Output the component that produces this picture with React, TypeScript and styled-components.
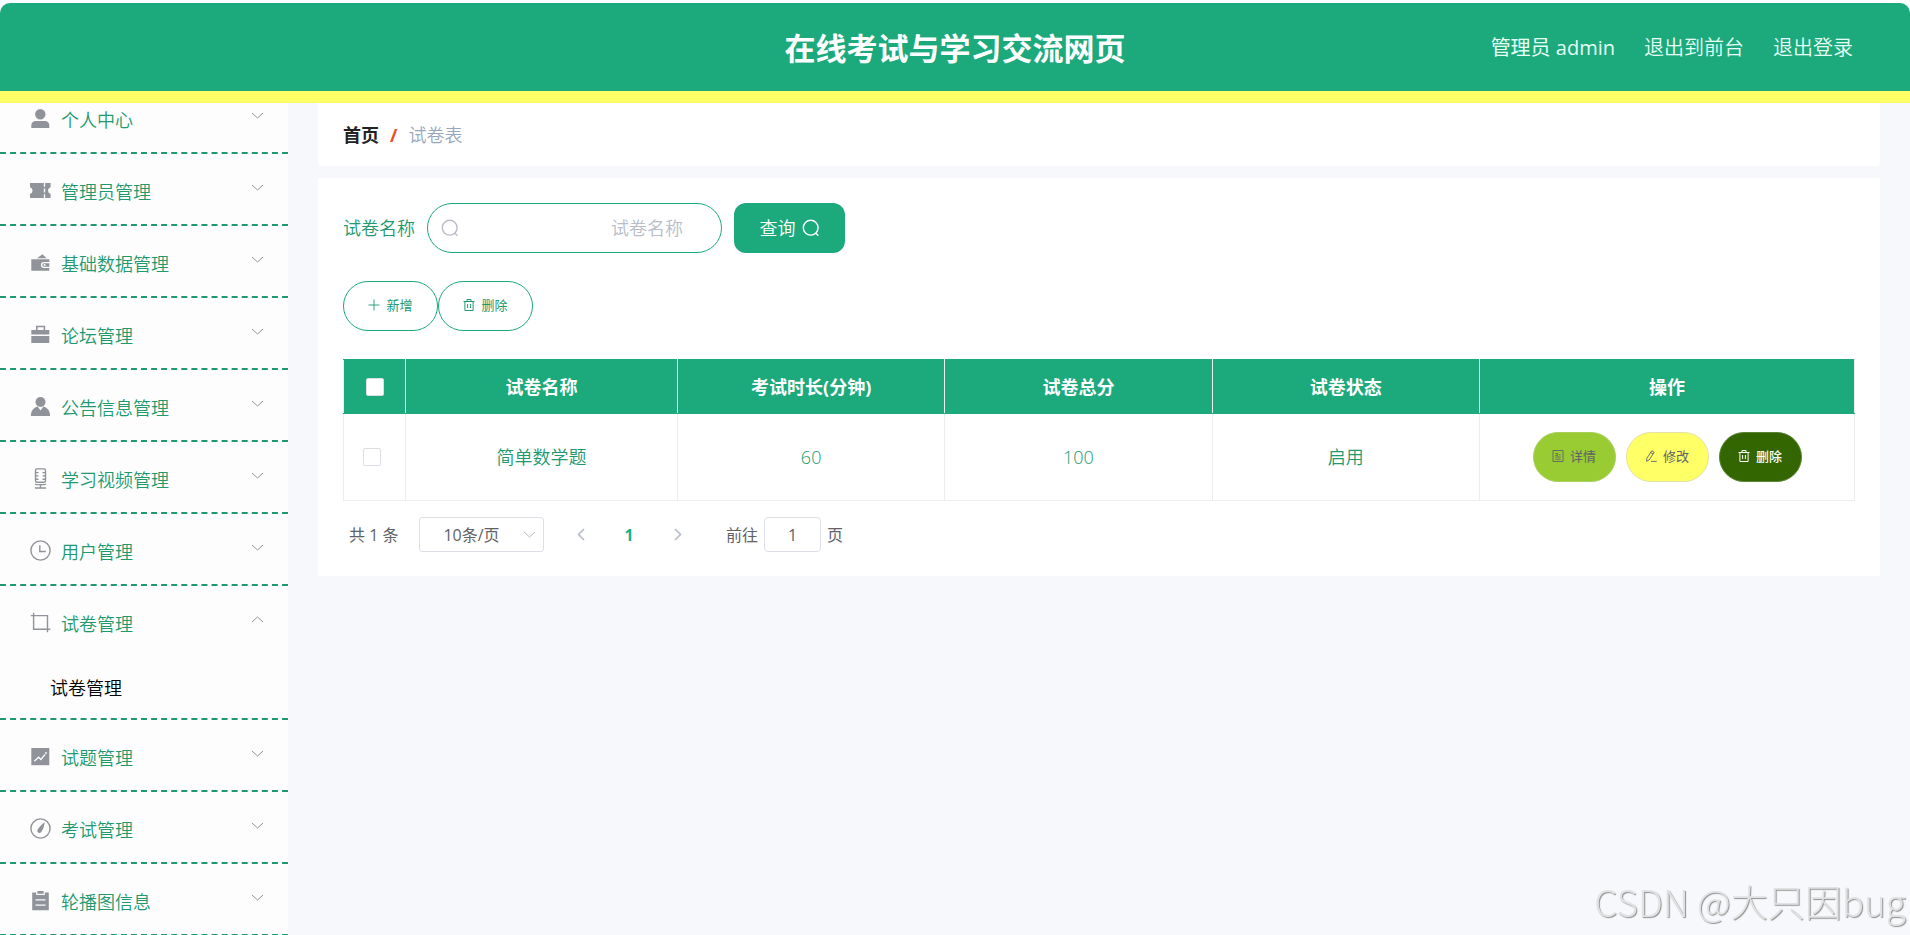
import React from "react";
import styled, { createGlobalStyle } from "styled-components";

const c = {
  green: "#1ca97c",
  text: "#20996f",
  yellow: "#ffff66",
  page: "#f6f8fb",
  side: "#fdfdfd",
  line: "#ebeef0",
  field: "#dcdfe6",
  muted: "#b8bdc7",
  grey: "#606266",
  icon: "#909399",
};

const Global = createGlobalStyle`
  *, *::before, *::after { box-sizing: border-box; }
  body {
    margin: 0;
    background: #fbfefd;
    color: ${c.text};
    font-family: "Open Sans", "Noto Sans CJK SC", sans-serif;
    font-size: 18px;
    font-weight: 350;
    line-height: 24px;
  }
  button, input, select { font: inherit; color: inherit; margin: 0; }
  button { cursor: pointer; }
  a { color: inherit; text-decoration: none; }
`;

const Shell = styled.div`
  height: 100vh;
  padding-top: 3px;
  display: flex;
  flex-direction: column;
  overflow: hidden;
`;

const Header = styled.header`
  flex: none;
  display: grid;
  grid-template-columns: 1fr auto 1fr;
  align-items: center;
  height: 100px;
  padding: 2px 57px 0;
  background: ${c.green};
  border-bottom: 12px solid ${c.yellow};
  border-radius: 10px 10px 0 0;
  color: #fff;
`;

const Title = styled.h1`
  grid-column: 2;
  margin: 0;
  font-size: 31px;
  line-height: 40px;
  font-weight: 700;
`;

const UserNav = styled.nav`
  display: flex;
  justify-content: flex-end;
  gap: 29px;
  font-size: 20px;
  color: #e6fff6;
`;

const UserName = styled.span`
  font-weight: 400;
`;

const Body = styled.div`
  flex: 1;
  min-height: 0;
  display: flex;
  background: ${c.page};
`;

const Sidebar = styled.aside`
  flex: none;
  width: 288px;
  overflow: hidden;
  background: ${c.side};
`;

const Menu = styled.ul`
  list-style: none;
  margin: -21px 0 0;
  padding: 0;
`;

const MenuItem = styled.li`
  border-bottom: 2px dashed ${c.text};
`;

const MenuTitle = styled.button`
  display: flex;
  align-items: center;
  gap: 10px;
  width: 100%;
  height: 70px;
  padding: 2px 24px 0 30px;
  border: 0;
  background: none;
  text-align: left;
`;

const MenuText = styled.span`
  flex: 1;
  padding-top: 3px;
`;

const ArrowIcon = styled.svg<{ $open?: boolean }>`
  width: 13px;
  height: 13px;
  margin-bottom: 5px;
  fill: none;
  stroke: ${c.icon};
  transform: rotate(${(p) => (p.$open ? 180 : 0)}deg);
`;

const SubLink = styled.a`
  display: block;
  height: 62px;
  padding: 20px 0 0 50px;
  color: #000;
`;

const MenuIcon = styled.svg`
  flex: none;
  width: 21px;
  height: 21px;
  fill: ${c.icon};
  stroke: none;

  .line { fill: none; stroke: ${c.icon}; stroke-width: 1.4; }
  .cut { fill: none; stroke: ${c.side}; stroke-width: 1.3; }
  .hole { fill: ${c.side}; }
`;

const Main = styled.main`
  flex: 1;
  min-width: 0;
  padding: 0 30px;
`;

const Crumbs = styled.nav`
  display: flex;
  align-items: center;
  gap: 11px;
  height: 63px;
  padding: 0 25px;
  margin-bottom: 12px;
  background: #fff;
  border-radius: 0 0 4px 4px;
  color: #97a8be;
`;

const Home = styled.a`
  color: #222;
  font-weight: 700;
`;

const Slash = styled.span`
  color: #f04a23;
  font-weight: 700;
`;

const Card = styled.section`
  padding: 25px 25px 24px;
  background: #fff;
`;

const SearchForm = styled.form`
  display: flex;
  align-items: center;
  gap: 12px;
  margin-bottom: 28px;
`;

const SearchBox = styled.div`
  display: flex;
  align-items: center;
  width: 295px;
  height: 50px;
  padding: 0 36px 0 13px;
  border: 1px solid ${c.green};
  border-radius: 25px;
  color: ${c.muted};
`;

const SearchInput = styled.input`
  flex: 1;
  min-width: 0;
  border: 0;
  outline: 0;
  background: none;
  text-align: right;
  color: ${c.grey};
  &::placeholder { color: ${c.muted}; opacity: 1; }
`;

const QueryButton = styled.button`
  display: flex;
  align-items: center;
  justify-content: center;
  gap: 6px;
  width: 111px;
  height: 50px;
  border: 0;
  border-radius: 12px;
  background: ${c.green};
  color: #fff;
`;

const Glyph = styled.svg<{ $size: number }>`
  flex: none;
  width: ${(p) => p.$size}px;
  height: ${(p) => p.$size}px;
  fill: none;
  stroke: currentColor;
`;

const Toolbar = styled.div`
  display: flex;
  margin-bottom: 28px;
`;

const PillButton = styled.button<{ $bg?: string; $fg?: string; $edge?: string; $width: number; $strong?: boolean }>`
  display: flex;
  align-items: center;
  justify-content: center;
  gap: 6px;
  width: ${(p) => p.$width}px;
  height: 50px;
  padding: 0 0 2px;
  border: 1px solid ${(p) => p.$edge ?? c.green};
  border-radius: 25px;
  background: ${(p) => p.$bg ?? "#fff"};
  color: ${(p) => p.$fg ?? c.text};
  font-size: 13px;
  font-weight: ${(p) => (p.$strong ? 500 : 400)};
`;

const Table = styled.table`
  width: 100%;
  table-layout: fixed;
  border-collapse: collapse;
  text-align: center;
`;

const Col = styled.col<{ $w?: string }>`
  width: ${(p) => p.$w ?? "auto"};
`;

const Th = styled.th`
  height: 54px;
  padding: 0;
  background: ${c.green};
  border: 1px solid ${c.line};
  border-top-color: ${c.green};
  border-bottom-color: ${c.green};
  color: #fff;
  font-weight: 700;
`;

const Td = styled.td`
  height: 87px;
  padding: 0 0 1px;
  border: 1px solid ${c.line};
`;

const SelectTd = styled(Td)`
  padding: 0 5px 0 0;
`;

const Check = styled.input`
  appearance: none;
  display: block;
  width: 18px;
  height: 18px;
  margin: 0 auto;
  border: 1px solid ${c.field};
  border-radius: 2px;
  background: #fff;
`;

const RowActions = styled.div`
  display: flex;
  justify-content: center;
  gap: 10px;
`;

const Pager = styled.div`
  display: flex;
  align-items: center;
  height: 35px;
  margin-top: 16px;
  padding-left: 6px;
  font-size: 16px;
  font-weight: 400;
  color: ${c.grey};
`;

const Total = styled.span`
  width: 70px;
`;

const SizeBox = styled.div`
  position: relative;
  width: 125px;
`;

const SizeSelect = styled.select`
  appearance: none;
  display: block;
  width: 100%;
  height: 35px;
  padding: 0 20px 0 0;
  border: 1px solid ${c.field};
  border-radius: 3px;
  background: #fff;
  text-align: center;
  text-align-last: center;
`;

const SizeArrow = styled.svg`
  position: absolute;
  right: 8px;
  top: 11px;
  width: 13px;
  height: 13px;
  fill: none;
  stroke: ${c.muted};
  pointer-events: none;
`;

const Pages = styled.div`
  display: flex;
  margin: 0 25px 0 13px;
`;

const PageButton = styled.button`
  display: flex;
  align-items: center;
  justify-content: center;
  width: 48px;
  height: 35px;
  padding: 0;
  border: 0;
  background: none;
  color: #18b08c;
  font-weight: 700;
  &:disabled { color: #b4bccc; }
`;

const Jump = styled.label`
  display: flex;
  align-items: center;
  gap: 6px;
`;

const JumpInput = styled.input`
  width: 57px;
  height: 35px;
  padding: 0;
  border: 1px solid ${c.field};
  border-radius: 4px;
  text-align: center;
`;

const Watermark = styled.div`
  position: fixed;
  right: 4px;
  bottom: 8px;
  font-family: "Noto Sans CJK SC", sans-serif;
  font-size: 37px;
  line-height: 52px;
  font-weight: 300;
  color: #e2e2e3;
  text-shadow: 1px 1px 1px #8f8f8f;
  pointer-events: none;
`;

const icons: Record<string, React.ReactNode> = {
  user: (
    <>
      <circle cx="10.3" cy="6.2" r="5.2" />
      <path d="M1.3 20v-2.6c0-2.600 1.800-4.400 4.400-4.400h9.200c2.600 0 4.400 1.800 4.400 4.400V20z" />
    </>
  ),
  ticket: (
    <>
      <path d="M0 3h20.600v4.200a3.400 3.400 0 0 0 0 6.600V18H0v-4.200a3.400 3.400 0 0 0 0-6.600z" />
      <path className="cut" d="M14.500 2.500v4.200M14.500 8.600v3.800M14.500 14.300v4.200" />
    </>
  ),
  wallet: (
    <>
      <path d="M7 6.200 12.400 2.200 16.600 6.200z" />
      <path d="M1.300 7.200h18V10h-5.400a3 3 0 0 0 0 6h5.400v2.800h-18z" />
      <path d="M19.300 11.200h-5.200a1.800 1.800 0 0 0 0 3.600h5.200z" />
      <circle className="hole" cx="14.600" cy="13" r="1" />
    </>
  ),
  briefcase: (
    <>
      <path fillRule="evenodd" d="M6 6V1.700h9.200V6h4.100v4.600H1.300V6zM7.600 6h6V3.300h-6z" />
      <path d="M1.300 12h18v7h-18z" />
    </>
  ),
  custom: (
    <>
      <circle cx="10.500" cy="6" r="5" />
      <path d="M.9 20c0-4.900 2.500-8.300 6.800-9.400l2.800 4 2.800-4c4.300 1.100 6.800 4.500 6.800 9.400z" />
    </>
  ),
  mic: (
    <path
      className="line"
      d="M7 .9h7q1.500 0 1.500 1.500v10.400q0 1.500-1.500 1.500H7q-1.500 0-1.500-1.500V2.400Q5.500.9 7 .9zM5.500 4.600h3M5.500 7.900h3M5.500 11.200h3M15.500 4.600h-3M15.500 7.900h-3M15.500 11.200h-3M5 15.800q.6.800 2 .8h7q1.400 0 2-.8M10.500 16.600v3M5 20h11"
    />
  ),
  clock: (
    <>
      <circle className="line" cx="10.500" cy="10.500" r="9.600" />
      <path className="line" d="M9.800 5.200v6.300h6" />
    </>
  ),
  crop: <path className="line" d="M3.600.7v16.600h16.700M.8 3.600h16.700v16.700" />,
  chart: (
    <>
      <path d="M1.300 2h18v17.200h-18z" />
      <path className="cut" d="m4.300 15.200 4.300-4 2.300 2.300 4.300-5.200" />
      <circle className="hole" cx="16" cy="7" r=".9" />
    </>
  ),
  compass: (
    <>
      <circle className="line" cx="10.500" cy="10.500" r="9.600" />
      <path d="M14.800 4.200c-.4 3.400-1.600 6.700-3.200 9.200-1 1.500-2.500 1.900-3.500 1.200s-1.100-2-.1-3.500c1.600-2.500 4-5.200 6.800-6.900z" />
    </>
  ),
  order: (
    <>
      <path d="M2.200 2.600h4V5h8.600V2.600h4v17.600H2.200z" />
      <path d="M7.400 1h6.200v2.800H7.400z" />
      <path className="cut" d="M5.500 9.800h10M5.500 15.200h10" />
    </>
  ),
};

const menu = [
  { label: "个人中心", icon: "user" },
  { label: "管理员管理", icon: "ticket" },
  { label: "基础数据管理", icon: "wallet" },
  { label: "论坛管理", icon: "briefcase" },
  { label: "公告信息管理", icon: "custom" },
  { label: "学习视频管理", icon: "mic" },
  { label: "用户管理", icon: "clock" },
  { label: "试卷管理", icon: "crop", children: ["试卷管理"] },
  { label: "试题管理", icon: "chart" },
  { label: "考试管理", icon: "compass" },
  { label: "轮播图信息", icon: "order" },
];

const Magnifier = () => (
  <Glyph $size={18} viewBox="0 0 18 18" strokeWidth="1.4" aria-hidden>
    <circle cx="8.700" cy="8.700" r="7.400" />
    <path d="m13.600 14 2.800 2.800" />
  </Glyph>
);

const Trash = () => (
  <Glyph $size={12} viewBox="0 0 12 12" aria-hidden>
    <path d="M.5 2.500h11M4 2.500v-2h4v2M1.900 2.500v9h8.200v-9M4.600 5v4M7.400 5v4" />
  </Glyph>
);

const Plus = () => (
  <Glyph $size={12} viewBox="0 0 12 12" strokeWidth=".9" aria-hidden>
    <path d="M6 .5v11M.5 6h11" />
  </Glyph>
);

const Doc = () => (
  <Glyph $size={12} viewBox="0 0 12 12" strokeWidth=".9" aria-hidden>
    <path d="M1 .5h10v11H1zM3.300 3.500h2.200v2H3.300M3.300 7h5.400M3.300 9.200h5.400M7 4.800h1.700" />
  </Glyph>
);

const Pencil = () => (
  <Glyph $size={12} viewBox="0 0 12 12" strokeWidth=".9" aria-hidden>
    <path d="m6.800.8 2.400 1.500-5 7.600-2.700 1.300.3-2.800zM5.800 2.600l2.300 1.500M6 11.400h5.700" />
  </Glyph>
);

export default function App() {
  return (
    <>
      <Global />
      <Shell>
        <Header>
          <Title>在线考试与学习交流网页</Title>
          <UserNav>
            <UserName>管理员 admin</UserName>
            <a href="#front">退出到前台</a>
            <a href="#logout">退出登录</a>
          </UserNav>
        </Header>
        <Body>
          <Sidebar>
            <Menu>
              {menu.map((m) => (
                <MenuItem key={m.label}>
                  <MenuTitle type="button" aria-expanded={!!m.children}>
                    <MenuIcon viewBox="0 0 21 21" aria-hidden>{icons[m.icon]}</MenuIcon>
                    <MenuText>{m.label}</MenuText>
                    <ArrowIcon $open={!!m.children} viewBox="0 0 13 13" aria-hidden>
                      <path d="m1 4 5.500 5L12 4" />
                    </ArrowIcon>
                  </MenuTitle>
                  {m.children?.map((s) => (
                    <SubLink key={s} href="#papers">{s}</SubLink>
                  ))}
                </MenuItem>
              ))}
            </Menu>
          </Sidebar>
          <Main>
            <Crumbs>
              <Home href="#home">首页</Home>
              <Slash>/</Slash>
              <span>试卷表</span>
            </Crumbs>
            <Card>
              <SearchForm onSubmit={(e) => e.preventDefault()}>
                <label htmlFor="paper-name">试卷名称</label>
                <SearchBox>
                  <Magnifier />
                  <SearchInput id="paper-name" placeholder="试卷名称" />
                </SearchBox>
                <QueryButton type="submit">
                  查询
                  <Magnifier />
                </QueryButton>
              </SearchForm>
              <Toolbar>
                <PillButton type="button" $width={95}><Plus />新增</PillButton>
                <PillButton type="button" $width={95}><Trash />删除</PillButton>
              </Toolbar>
              <Table>
                <colgroup>
                  <Col $w="62px" />
                  <Col $w="18%" />
                  <Col />
                  <Col />
                  <Col />
                  <Col $w="375px" />
                </colgroup>
                <thead>
                  <tr>
                    <Th><Check type="checkbox" aria-label="全选" /></Th>
                    <Th>试卷名称</Th>
                    <Th>考试时长(分钟)</Th>
                    <Th>试卷总分</Th>
                    <Th>试卷状态</Th>
                    <Th>操作</Th>
                  </tr>
                </thead>
                <tbody>
                  <tr>
                    <SelectTd><Check type="checkbox" aria-label="选择" /></SelectTd>
                    <Td>简单数学题</Td>
                    <Td>60</Td>
                    <Td>100</Td>
                    <Td>启用</Td>
                    <Td>
                      <RowActions>
                        <PillButton type="button" $width={83} $bg="#99cc33" $fg="#606266" $edge="#a9cf5c"><Doc />详情</PillButton>
                        <PillButton type="button" $width={83} $bg="#ffff66" $fg="#606266" $edge="#e2e2a8"><Pencil />修改</PillButton>
                        <PillButton type="button" $width={83} $bg="#336600" $fg="#fff" $edge="#5d8437" $strong><Trash />删除</PillButton>
                      </RowActions>
                    </Td>
                  </tr>
                </tbody>
              </Table>
              <Pager>
                <Total>共 1 条</Total>
                <SizeBox>
                  <SizeSelect aria-label="每页条数" defaultValue="10">
                    <option value="10">10条/页</option>
                  </SizeSelect>
                  <SizeArrow viewBox="0 0 13 13" aria-hidden>
                    <path d="m1 4 5.500 5L12 4" />
                  </SizeArrow>
                </SizeBox>
                <Pages>
                  <PageButton type="button" disabled aria-label="上一页">
                    <Glyph $size={13} viewBox="0 0 13 13" strokeWidth="1.600" aria-hidden><path d="M9 1 3.500 6.500 9 12" /></Glyph>
                  </PageButton>
                  <PageButton type="button">1</PageButton>
                  <PageButton type="button" disabled aria-label="下一页">
                    <Glyph $size={13} viewBox="0 0 13 13" strokeWidth="1.600" aria-hidden><path d="m4 1 5.500 5.500L4 12" /></Glyph>
                  </PageButton>
                </Pages>
                <Jump>
                  前往
                  <JumpInput defaultValue="1" />
                  页
                </Jump>
              </Pager>
            </Card>
          </Main>
        </Body>
      </Shell>
      <Watermark>CSDN @大只因bug</Watermark>
    </>
  );
}
